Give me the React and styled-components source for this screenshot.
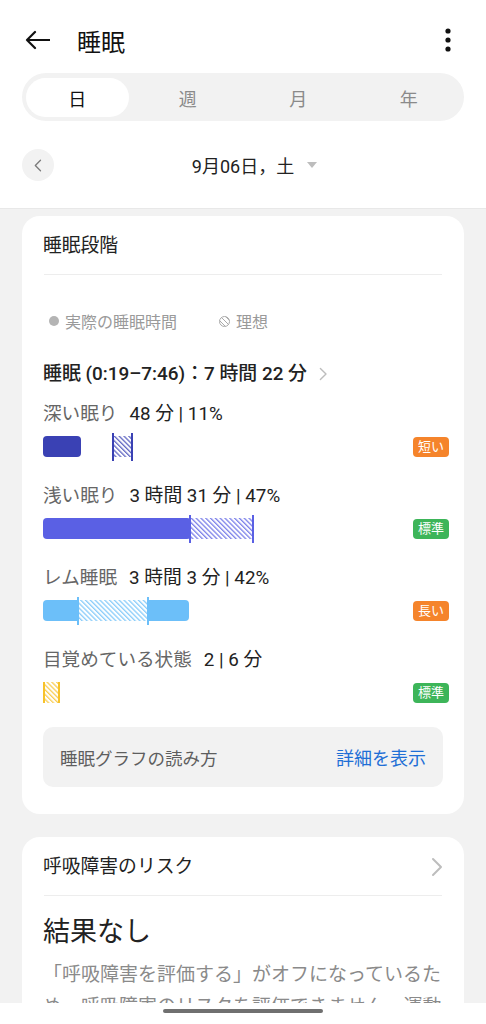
import React from "react";
import styled, { createGlobalStyle } from "styled-components";

const GlobalStyle = createGlobalStyle`
  html, body {
    margin: 0;
    padding: 0;
    background: #f2f2f2;
  }
  body {
    font-family: Roboto, "Noto Sans CJK JP", "Noto Sans", sans-serif;
    color: #222;
  }
`;

const Page = styled.div`
  width: 486px;
  height: 1024px;
  overflow: hidden;
  background: #f2f2f2;
`;

const Header = styled.header`
  background: #fff;
  padding: 8px 22px 27px;
  border-bottom: 1px solid #e8e8e8;
`;

const TopBar = styled.div`
  height: 64px;
  display: flex;
  align-items: center;
`;

const Title = styled.h1`
  margin: 0 0 0 27px;
  font-size: 24px;
  font-weight: 400;
  color: #111;
  flex: 1;
`;

const Segment = styled.div`
  margin-top: 1px;
  height: 48px;
  border-radius: 24px;
  background: #f2f2f2;
  display: grid;
  grid-template-columns: repeat(4, 1fr);
`;

const Tab = styled.div`
  margin: 5px 4px 4px;
  border-radius: 20px;
  display: flex;
  align-items: center;
  justify-content: center;
  font-size: 18px;
  background: ${(p) => (p.$active ? "#fff" : "transparent")};
  color: ${(p) => (p.$active ? "#111" : "#8a8a8a")};
`;

const DateRow = styled.div`
  margin-top: 28px;
  height: 32px;
  display: grid;
  grid-template-columns: 32px 1fr 32px;
  align-items: center;
`;

const RoundBtn = styled.div`
  width: 32px;
  height: 32px;
  border-radius: 50%;
  background: #f2f2f2;
  display: flex;
  align-items: center;
  justify-content: center;
`;

const DateLabel = styled.div`
  justify-self: center;
  position: relative;
  font-size: 18px;
  color: #222;
  &::after {
    content: "";
    position: absolute;
    left: calc(100% + 13px);
    top: 10px;
    border-left: 5px solid transparent;
    border-right: 5px solid transparent;
    border-top: 6px solid #bdbdbd;
  }
`;

const Main = styled.main`
  padding: 7px 22px 0;
`;

const Card = styled.section`
  background: #fff;
  border-radius: 18px;
  padding: 17px 21px 27px;
  & + & {
    margin-top: 23px;
  }
`;

const CardHead = styled.div`
  display: flex;
  align-items: center;
  justify-content: space-between;
  font-size: 18.8px;
  line-height: 26px;
  color: #222;
`;

const Divider = styled.div`
  height: 1px;
  background: #ededed;
  margin: 15px 1px 0;
`;

const Legend = styled.div`
  margin-top: 35px;
  height: 22px;
  padding-left: 6px;
  display: flex;
  align-items: center;
  font-size: 16px;
  color: #9a9a9a;
`;

const LegendItem = styled.span`
  display: inline-flex;
  align-items: center;
  gap: 6px;
  margin-right: 42px;
`;

const Dot = styled.span`
  width: 10px;
  height: 10px;
  border-radius: 50%;
  background: #b4b4b4;
`;

const Summary = styled.div`
  margin-top: 29px;
  display: flex;
  align-items: center;
  gap: 12px;
  font-size: 18.9px;
  line-height: 26px;
  font-weight: 500;
  color: #222;
`;

const Stages = styled.div`
  margin-top: 14px;
  display: flex;
  flex-direction: column;
  gap: 22px;
`;

const StageLabel = styled.div`
  font-size: 18.6px;
  line-height: 26px;
  color: #666;
  span {
    color: #222;
    margin-left: 12px;
    font-size: 18.8px;
  }
`;

const BarLine = styled.div`
  margin-top: 6px;
  height: 28px;
  display: flex;
  align-items: center;
  justify-content: space-between;
`;

const Badge = styled.span`
  margin-right: -6px;
  width: 36px;
  height: 20px;
  border-radius: 4px;
  font-size: 13px;
  line-height: 20px;
  text-align: center;
  color: #fff;
  background: ${(p) => (p.$tone === "orange" ? "#f5842b" : "#3db559")};
`;

const InfoBox = styled.div`
  margin-top: 20px;
  height: 60px;
  border-radius: 10px;
  background: #f2f2f2;
  padding: 0 17px;
  display: flex;
  align-items: center;
  justify-content: space-between;
  font-size: 17.5px;
  color: #5e5e5e;
`;

const LinkText = styled.span`
  color: #1f6fd6;
  font-size: 18px;
`;

const Result = styled.div`
  margin-top: 17px;
  font-size: 27px;
  line-height: 38px;
  color: #222;
`;

const Para = styled.p`
  margin: 8px 0 0;
  font-size: 19px;
  line-height: 32px;
  color: #8a8a8a;
`;

const NavBar = styled.div`
  position: fixed;
  left: 0;
  bottom: 0;
  width: 486px;
  height: 21px;
  background: #fff;
  display: flex;
  justify-content: center;
  padding-top: 6px;
  box-sizing: border-box;
`;

const Handle = styled.div`
  width: 160px;
  height: 4px;
  border-radius: 2px;
  background: #707070;
`;

const Chevron = ({ size = 14, color = "#bdbdbd", dir = "right" }) => (
  <svg width={size * 0.6} height={size} viewBox="0 0 6 10" fill="none">
    <path
      d={dir === "right" ? "M1 1 L5 5 L1 9" : "M5 1 L1 5 L5 9"}
      stroke={color}
      strokeWidth="1"
      strokeLinecap="round"
      strokeLinejoin="round"
    />
  </svg>
);

function StageBar({ id, color, solid, hatches = [], marks = [], tall = true }) {
  return (
    <svg width="260" height="28" viewBox="0 0 260 28">
      <defs>
        <pattern id={id} width="3.4" height="3.4" patternUnits="userSpaceOnUse" patternTransform="rotate(-45)">
          <rect width="3.4" height="3.4" fill="#fff" />
          <rect width="1.3" height="3.4" fill={color} opacity="0.8" />
        </pattern>
      </defs>
      {solid && <rect x={solid[0]} y="3" width={solid[1] - solid[0]} height="21" rx="4" fill={color} />}
      {hatches.map(([a, b]) => (
        <rect key={a} x={a} y="3" width={b - a} height="21" fill={`url(#${id})`} />
      ))}
      {marks.map((m) => (
        <rect key={m} x={m - 1} y={tall ? 0 : 3} width="2" height={tall ? 28 : 21} fill={color} />
      ))}
    </svg>
  );
}

const stages = [
  {
    label: "深い眠り",
    value: "48 分 | 11%",
    badge: "短い",
    tone: "orange",
    bar: { id: "hp-deep", color: "#3a41b4", solid: [0, 38], hatches: [[70, 89]], marks: [70, 89] },
  },
  {
    label: "浅い眠り",
    value: "3 時間 31 分 | 47%",
    badge: "標準",
    tone: "green",
    bar: { id: "hp-light", color: "#5a60e4", solid: [0, 148], hatches: [[147, 210]], marks: [147, 210] },
  },
  {
    label: "レム睡眠",
    value: "3 時間 3 分 | 42%",
    badge: "長い",
    tone: "orange",
    bar: { id: "hp-rem", color: "#6cbff9", solid: [0, 146], hatches: [[35, 105]], marks: [35, 105] },
  },
  {
    label: "目覚めている状態",
    value: "2 | 6 分",
    badge: "標準",
    tone: "green",
    bar: { id: "hp-awake", color: "#f7c22a", hatches: [[1, 16]], marks: [1, 16], tall: false },
  },
];

export default function App() {
  return (
    <Page>
      <GlobalStyle />
      <Header>
        <TopBar>
          <svg width="28" height="28" viewBox="0 0 28 28" fill="none">
            <path d="M28 14 H5 M13 6 L5 14 L13 22" stroke="#111" strokeWidth="2.2" strokeLinecap="round" strokeLinejoin="round" />
          </svg>
          <Title>睡眠</Title>
          <svg width="32" height="28" viewBox="0 0 32 28">
            <circle cx="16" cy="5" r="2.6" fill="#111" />
            <circle cx="16" cy="14" r="2.6" fill="#111" />
            <circle cx="16" cy="23" r="2.6" fill="#111" />
          </svg>
        </TopBar>
        <Segment>
          {["日", "週", "月", "年"].map((t, i) => (
            <Tab key={t} $active={i === 0}>{t}</Tab>
          ))}
        </Segment>
        <DateRow>
          <RoundBtn>
            <Chevron dir="left" size={13} color="#7a7a7a" />
          </RoundBtn>
          <DateLabel>9月06日，土</DateLabel>
        </DateRow>
      </Header>

      <Main>
        <Card>
          <CardHead>睡眠段階</CardHead>
          <Divider />
          <Legend>
            <LegendItem>
              <Dot />
              実際の睡眠時間
            </LegendItem>
            <LegendItem>
              <svg width="11" height="11" viewBox="0 0 11 11">
                <defs>
                  <clipPath id="lg-clip">
                    <circle cx="5.5" cy="5.5" r="5" />
                  </clipPath>
                </defs>
                <circle cx="5.5" cy="5.5" r="5" fill="#fff" stroke="#aaa" strokeWidth="1" />
                <g clipPath="url(#lg-clip)" stroke="#aaa" strokeWidth="1">
                  <path d="M-2 2 L9 13 M0 -1 L12 11 M3 -3 L14 8" />
                </g>
              </svg>
              理想
            </LegendItem>
          </Legend>
          <Summary>
            睡眠 (0:19–7:46)：7 時間 22 分
            <Chevron size={14} />
          </Summary>
          <Stages>
            {stages.map((s) => (
              <div key={s.label}>
                <StageLabel>
                  {s.label}
                  <span>{s.value}</span>
                </StageLabel>
                <BarLine>
                  <StageBar {...s.bar} />
                  <Badge $tone={s.tone}>{s.badge}</Badge>
                </BarLine>
              </div>
            ))}
          </Stages>
          <InfoBox>
            睡眠グラフの読み方
            <LinkText>詳細を表示</LinkText>
          </InfoBox>
        </Card>

        <Card>
          <CardHead>
            呼吸障害のリスク
            <Chevron size={20} />
          </CardHead>
          <Divider />
          <Result>結果なし</Result>
          <Para>
            「呼吸障害を評価する」がオフになっているため、呼吸障害のリスクを評価できません。運動健康アプリの設定でオンにしてください。
          </Para>
        </Card>
      </Main>

      <NavBar>
        <Handle />
      </NavBar>
    </Page>
  );
}
